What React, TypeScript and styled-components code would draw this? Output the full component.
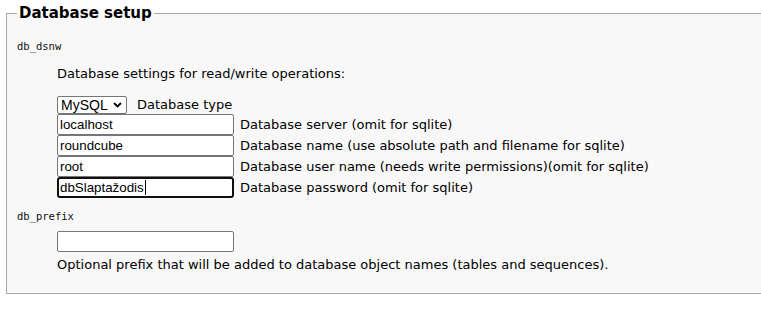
import React from "react";
import styled, { createGlobalStyle } from "styled-components";

const Global = createGlobalStyle`
  html, body { margin: 0; padding: 0; background: #fff; overflow: hidden; }
  body { font-family: "DejaVu Sans", Verdana, sans-serif; font-size: 13px; color: #000; }
`;

const Page = styled.div`
  padding-top: 4px;
  width: 761px;
  overflow: hidden;
`;

const Fieldset = styled.fieldset`
  margin: 0 0 0 6px;
  width: 820px;
  border: 1px solid #a9a9a9;
  background: #f8f8f8;
  padding: 0 10px 20px 10px;
  min-width: 0;
`;

const Legend = styled.legend`
  font-family: "DejaVu Sans", Verdana, sans-serif;
  font-weight: bold;
  font-size: 15px;
  line-height: 18px;
  padding: 0 2px;
  color: #000;
`;

const PropName = styled.div<{ $first?: boolean }>`
  font-family: "DejaVu Sans Mono", Consolas, monospace;
  font-size: 10.5px;
  line-height: 13px;
  color: #111;
  margin-top: ${(p) => (p.$first ? "18px" : "12px")};
`;

const Body = styled.div`
  margin-left: 40px;
  display: flex;
  flex-direction: column;
  align-items: flex-start;
`;

const Desc = styled.p`
  margin: 13px 0 14px 0;
  line-height: 16px;
`;

const Row = styled.div`
  display: flex;
  align-items: center;
  gap: 6px;
`;

const SelectWrap = styled.div`
  position: relative;
  width: 70px;
  height: 18px;
  margin-bottom: 0;
  margin-right: 4px;
`;

const Select = styled.select`
  appearance: none;
  -webkit-appearance: none;
  box-sizing: border-box;
  width: 100%;
  height: 100%;
  border: 1px solid #767676;
  border-radius: 2px;
  background: #fff;
  font-family: "Liberation Sans", Arial, sans-serif;
  font-size: 14px;
  color: #000;
  padding: 0 0 0 3px;
  margin: 0;
  outline: none;
`;

const Chevron = styled.svg`
  position: absolute;
  right: 5px;
  top: 6px;
  pointer-events: none;
`;

const FieldWrap = styled.div`
  position: relative;
  width: 177px;
  height: 21px;
`;

const Input = styled.input<{ $focused?: boolean }>`
  box-sizing: border-box;
  width: 100%;
  height: 100%;
  margin: 0;
  border: ${(p) => (p.$focused ? "2px solid #101010" : "1px solid #767676")};
  border-radius: ${(p) => (p.$focused ? "3px" : "2px")};
  padding: ${(p) => (p.$focused ? "1px 1px" : "1px 2px")};
  background: #fff;
  font-family: "Liberation Sans", Arial, sans-serif;
  font-size: 13.33px;
  color: #000;
  outline: none;
`;

const Caret = styled.span`
  position: absolute;
  left: 88px;
  top: 3px;
  width: 1px;
  height: 15px;
  background: #000;
`;

const Label = styled.span`
  line-height: 16px;
  white-space: nowrap;
`;

const PrefixBlock = styled.div`
  margin-top: 8px;
  display: flex;
  flex-direction: column;
  align-items: flex-start;
  gap: 5px;
`;

const fields = [
  { value: "localhost", label: "Database server (omit for sqlite)" },
  { value: "roundcube", label: "Database name (use absolute path and filename for sqlite)" },
  { value: "root", label: "Database user name (needs write permissions)(omit for sqlite)" },
  { value: "dbSlaptažodis", label: "Database password (omit for sqlite)", focused: true },
];

export default function App() {
  return (
    <Page>
      <Global />
      <Fieldset>
        <Legend>Database setup</Legend>
        <PropName $first>db_dsnw</PropName>
        <Body>
          <Desc>Database settings for read/write operations:</Desc>
          <Row>
            <SelectWrap>
              <Select defaultValue="mysql">
                <option value="mysql">MySQL</option>
              </Select>
              <Chevron width="9" height="6" viewBox="0 0 9 6">
                <path d="M1 1 L4.5 4.5 L8 1" fill="none" stroke="#000" strokeWidth="1.8" />
              </Chevron>
            </SelectWrap>
            <Label>Database type</Label>
          </Row>
          {fields.map((f) => (
            <Row key={f.value}>
              <FieldWrap>
                <Input type="text" defaultValue={f.value} $focused={f.focused} />
                {f.focused && <Caret />}
              </FieldWrap>
              <Label>{f.label}</Label>
            </Row>
          ))}
        </Body>
        <PropName>db_prefix</PropName>
        <Body>
          <PrefixBlock>
            <FieldWrap>
              <Input type="text" defaultValue="" />
            </FieldWrap>
            <Label>Optional prefix that will be added to database object names (tables and sequences).</Label>
          </PrefixBlock>
        </Body>
      </Fieldset>
    </Page>
  );
}
